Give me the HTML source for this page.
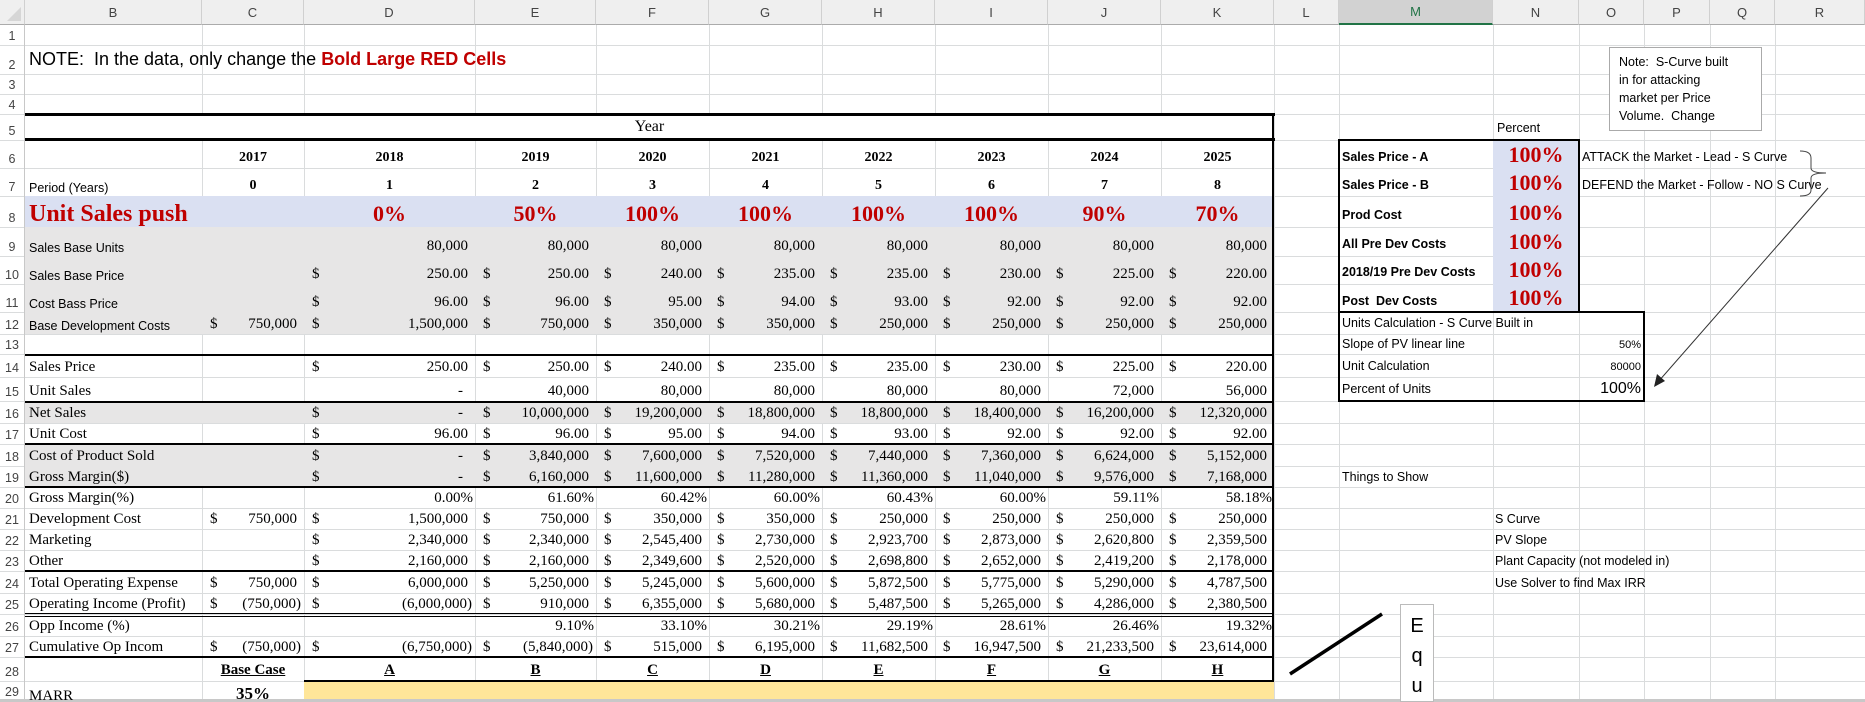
<!DOCTYPE html>
<html><head><meta charset="utf-8">
<style>
*{margin:0;padding:0;box-sizing:border-box}
body{width:1865px;height:702px;overflow:hidden;background:#fff;position:relative;font-family:"Liberation Serif",serif;color:#000}
.a{position:absolute}
.vl{position:absolute;top:25px;height:677px;width:1px;background:#dadcdd}
.hl{position:absolute;left:0;width:1865px;height:1px;background:#dadcdd}
.r{position:absolute;left:0;width:1865px}
.x{position:absolute;top:0;bottom:0;display:flex;justify-content:space-between;align-items:flex-end;padding:0 7px 2px 8px;font-size:15px;white-space:nowrap;line-height:1}
.n{justify-content:flex-end}
.p{padding-right:2px}
.q{padding-right:3px}
.ct{justify-content:center;padding:0 0 3px 0}
.x i{font-style:normal}
.B{left:25px;width:177px}.C{left:202px;width:102px}.D{left:304px;width:171px}.E{left:475px;width:121px}
.F{left:596px;width:113px}.G{left:709px;width:113px}.H{left:822px;width:113px}.I{left:935px;width:113px}
.J{left:1048px;width:113px}.K{left:1161px;width:113px}
.L{left:25px;width:300px;justify-content:flex-start;padding-left:4px}
.cal{font-family:"Liberation Sans",sans-serif;font-size:12.5px}
.bd{font-weight:bold;font-size:14px}
.rd{color:#c00000;font-weight:bold;font-size:22px;padding-bottom:2px}
.ul{font-weight:bold;text-decoration:underline}
.hdr{position:absolute;top:0;height:25px;background:#efefef;border-right:1px solid #d0d0d0;border-bottom:1px solid #ababab;font:13px "Liberation Sans",sans-serif;color:#444;display:flex;align-items:center;justify-content:center}
.rn{position:absolute;left:0;width:25px;font:12.5px "Liberation Sans",sans-serif;color:#444;display:flex;align-items:flex-end;justify-content:center;padding-bottom:2px;border-right:1px solid #c8c8c8}
.tk{position:absolute;background:#000}
.sa{font-family:"Liberation Sans",sans-serif;font-size:12.5px;position:absolute;white-space:nowrap}
</style></head><body>

<!-- column headers -->
<div class="hdr" style="left:0;width:25px"><svg width="14" height="14" style="position:absolute;right:3px;bottom:3px"><polygon points="14,0 14,14 0,14" fill="#d6d6d6"/></svg></div>
<div class="hdr" style="left:25px;width:177px">B</div>
<div class="hdr" style="left:202px;width:102px">C</div>
<div class="hdr" style="left:304px;width:171px">D</div>
<div class="hdr" style="left:475px;width:121px">E</div>
<div class="hdr" style="left:596px;width:113px">F</div>
<div class="hdr" style="left:709px;width:113px">G</div>
<div class="hdr" style="left:822px;width:113px">H</div>
<div class="hdr" style="left:935px;width:113px">I</div>
<div class="hdr" style="left:1048px;width:113px">J</div>
<div class="hdr" style="left:1161px;width:113px">K</div>
<div class="hdr" style="left:1274px;width:65px">L</div>
<div class="hdr" style="left:1339px;width:154px;background:#d2d2d2;color:#217346;border-bottom:2px solid #217346">M</div>
<div class="hdr" style="left:1493px;width:86px">N</div>
<div class="hdr" style="left:1579px;width:65px">O</div>
<div class="hdr" style="left:1644px;width:66px">P</div>
<div class="hdr" style="left:1710px;width:65px">Q</div>
<div class="hdr" style="left:1775px;width:90px">R</div>

<!-- gridlines -->
<div class="vl" style="left:202px"></div><div class="vl" style="left:304px"></div><div class="vl" style="left:475px"></div>
<div class="vl" style="left:596px"></div><div class="vl" style="left:709px"></div><div class="vl" style="left:822px"></div>
<div class="vl" style="left:935px"></div><div class="vl" style="left:1048px"></div><div class="vl" style="left:1161px"></div>
<div class="vl" style="left:1274px"></div><div class="vl" style="left:1339px"></div><div class="vl" style="left:1493px"></div>
<div class="vl" style="left:1579px"></div><div class="vl" style="left:1644px"></div><div class="vl" style="left:1710px"></div>
<div class="vl" style="left:1775px"></div>
<div class="hl" style="top:45px"></div><div class="hl" style="top:74px"></div><div class="hl" style="top:94px"></div>
<div class="hl" style="top:114px"></div><div class="hl" style="top:140px"></div><div class="hl" style="top:168px"></div>
<div class="hl" style="top:196px"></div><div class="hl" style="top:227px"></div><div class="hl" style="top:256px"></div>
<div class="hl" style="top:284px"></div><div class="hl" style="top:312px"></div><div class="hl" style="top:334px"></div>
<div class="hl" style="top:354px"></div><div class="hl" style="top:377px"></div><div class="hl" style="top:401px"></div>
<div class="hl" style="top:423px"></div><div class="hl" style="top:444px"></div><div class="hl" style="top:466px"></div>
<div class="hl" style="top:487px"></div><div class="hl" style="top:508px"></div><div class="hl" style="top:529px"></div>
<div class="hl" style="top:550px"></div><div class="hl" style="top:571px"></div><div class="hl" style="top:593px"></div>
<div class="hl" style="top:614px"></div><div class="hl" style="top:636px"></div><div class="hl" style="top:657px"></div>
<div class="hl" style="top:681px"></div>

<!-- fills -->
<div class="a" style="left:25px;top:114px;width:1249px;height:26px;background:#fff"></div>
<div class="a" style="left:25px;top:196px;width:1249px;height:31px;background:#dae0f2"></div>
<div class="a" style="left:25px;top:227px;width:1249px;height:107px;background:#e7e6e6"></div>
<div class="a" style="left:25px;top:402px;width:1249px;height:21px;background:#e7e6e6"></div>
<div class="a" style="left:25px;top:445px;width:1249px;height:42px;background:#e7e6e6"></div>
<div class="a" style="left:304px;top:682px;width:970px;height:18px;background:#ffe699"></div>
<div class="a" style="left:1493px;top:140px;width:86px;height:172px;background:#dae0f2"></div>

<!-- row numbers -->
<div class="rn" style="top:25px;height:20px">1</div><div class="rn" style="top:45px;height:29px">2</div>
<div class="rn" style="top:74px;height:20px">3</div><div class="rn" style="top:94px;height:20px">4</div>
<div class="rn" style="top:114px;height:26px">5</div><div class="rn" style="top:140px;height:28px">6</div>
<div class="rn" style="top:168px;height:28px">7</div><div class="rn" style="top:196px;height:31px">8</div>
<div class="rn" style="top:227px;height:29px">9</div><div class="rn" style="top:256px;height:28px">10</div>
<div class="rn" style="top:284px;height:28px">11</div><div class="rn" style="top:312px;height:22px">12</div>
<div class="rn" style="top:334px;height:20px">13</div><div class="rn" style="top:354px;height:23px">14</div>
<div class="rn" style="top:377px;height:24px">15</div><div class="rn" style="top:401px;height:22px">16</div>
<div class="rn" style="top:423px;height:21px">17</div><div class="rn" style="top:444px;height:22px">18</div>
<div class="rn" style="top:466px;height:21px">19</div><div class="rn" style="top:487px;height:21px">20</div>
<div class="rn" style="top:508px;height:21px">21</div><div class="rn" style="top:529px;height:21px">22</div>
<div class="rn" style="top:550px;height:21px">23</div><div class="rn" style="top:571px;height:22px">24</div>
<div class="rn" style="top:593px;height:21px">25</div><div class="rn" style="top:614px;height:22px">26</div>
<div class="rn" style="top:636px;height:21px">27</div><div class="rn" style="top:657px;height:24px">28</div>
<div class="rn" style="top:681px;height:21px;align-items:flex-start;padding-top:4px">29</div>

<!-- thick borders -->
<div class="tk" style="left:25px;top:113px;width:1250px;height:3px"></div>
<div class="tk" style="left:25px;top:138px;width:1250px;height:3px"></div>
<div class="tk" style="left:1272px;top:113px;width:2px;height:569px"></div>
<div class="tk" style="left:25px;top:354px;width:1249px;height:2px"></div>
<div class="tk" style="left:25px;top:401px;width:1249px;height:2px"></div>
<div class="tk" style="left:25px;top:443px;width:1249px;height:2px"></div>
<div class="tk" style="left:25px;top:486px;width:1249px;height:2px"></div>
<div class="tk" style="left:25px;top:570px;width:1249px;height:2px"></div>
<div class="tk" style="left:25px;top:613px;width:1249px;height:1px"></div>
<div class="tk" style="left:25px;top:616px;width:1249px;height:1px"></div>
<div class="tk" style="left:25px;top:656px;width:1249px;height:2px"></div>
<div class="tk" style="left:304px;top:680px;width:970px;height:2px"></div>
<div class="a" style="left:0;top:699px;width:1865px;height:3px;background:#c8c8c8"></div>

<!-- row 2 -->
<div class="a" style="left:29px;top:45px;height:29px;display:flex;align-items:center;font:18px 'Liberation Sans',sans-serif;white-space:nowrap">NOTE:&nbsp; In the data, only change the&nbsp;<b style="color:#c00000">Bold Large RED Cells</b></div>
<!-- row 5 -->
<div class="a" style="left:25px;top:114px;width:1249px;height:26px;display:flex;align-items:center;justify-content:center;font-size:16px">Year</div>

<div class="r" style="top:140px;height:28px">
<div class="x C ct bd">2017</div><div class="x D ct bd">2018</div><div class="x E ct bd">2019</div><div class="x F ct bd">2020</div><div class="x G ct bd">2021</div><div class="x H ct bd">2022</div><div class="x I ct bd">2023</div><div class="x J ct bd">2024</div><div class="x K ct bd">2025</div>
</div>
<div class="r" style="top:168px;height:28px">
<div class="x L cal">Period (Years)</div>
<div class="x C ct bd">0</div><div class="x D ct bd">1</div><div class="x E ct bd">2</div><div class="x F ct bd">3</div><div class="x G ct bd">4</div><div class="x H ct bd">5</div><div class="x I ct bd">6</div><div class="x J ct bd">7</div><div class="x K ct bd">8</div>
</div>
<div class="r" style="top:196px;height:31px">
<div class="x L" style="color:#c00000;font-weight:bold;font-size:24px;padding-bottom:1px">Unit Sales push</div>
<div class="x D ct rd">0%</div><div class="x E ct rd">50%</div><div class="x F ct rd">100%</div><div class="x G ct rd">100%</div><div class="x H ct rd">100%</div><div class="x I ct rd">100%</div><div class="x J ct rd">90%</div><div class="x K ct rd">70%</div>
</div>
<div class="r" style="top:227px;height:29px">
<div class="x L cal">Sales Base Units</div>
<div class="x D n">80,000</div><div class="x E n">80,000</div><div class="x F n">80,000</div><div class="x G n">80,000</div><div class="x H n">80,000</div><div class="x I n">80,000</div><div class="x J n">80,000</div><div class="x K n">80,000</div>
</div>
<div class="r" style="top:256px;height:28px">
<div class="x L cal">Sales Base Price</div>
<div class="x D"><i>$</i>250.00</div><div class="x E"><i>$</i>250.00</div><div class="x F"><i>$</i>240.00</div><div class="x G"><i>$</i>235.00</div><div class="x H"><i>$</i>235.00</div><div class="x I"><i>$</i>230.00</div><div class="x J"><i>$</i>225.00</div><div class="x K"><i>$</i>220.00</div>
</div>
<div class="r" style="top:284px;height:28px">
<div class="x L cal">Cost Bass Price</div>
<div class="x D"><i>$</i>96.00</div><div class="x E"><i>$</i>96.00</div><div class="x F"><i>$</i>95.00</div><div class="x G"><i>$</i>94.00</div><div class="x H"><i>$</i>93.00</div><div class="x I"><i>$</i>92.00</div><div class="x J"><i>$</i>92.00</div><div class="x K"><i>$</i>92.00</div>
</div>
<div class="r" style="top:312px;height:22px">
<div class="x L cal">Base Development Costs</div>
<div class="x C"><i>$</i>750,000</div><div class="x D"><i>$</i>1,500,000</div><div class="x E"><i>$</i>750,000</div><div class="x F"><i>$</i>350,000</div><div class="x G"><i>$</i>350,000</div><div class="x H"><i>$</i>250,000</div><div class="x I"><i>$</i>250,000</div><div class="x J"><i>$</i>250,000</div><div class="x K"><i>$</i>250,000</div>
</div>
<div class="r" style="top:355px;height:22px">
<div class="x L">Sales Price</div>
<div class="x D"><i>$</i>250.00</div><div class="x E"><i>$</i>250.00</div><div class="x F"><i>$</i>240.00</div><div class="x G"><i>$</i>235.00</div><div class="x H"><i>$</i>235.00</div><div class="x I"><i>$</i>230.00</div><div class="x J"><i>$</i>225.00</div><div class="x K"><i>$</i>220.00</div>
</div>
<div class="r" style="top:377px;height:24px">
<div class="x L">Unit Sales</div>
<div class="x D n" style="padding-right:12px">-</div><div class="x E n">40,000</div><div class="x F n">80,000</div><div class="x G n">80,000</div><div class="x H n">80,000</div><div class="x I n">80,000</div><div class="x J n">72,000</div><div class="x K n">56,000</div>
</div>
<div class="r" style="top:401px;height:22px">
<div class="x L">Net Sales</div>
<div class="x D" style="padding-right:12px"><i>$</i>-</div><div class="x E"><i>$</i>10,000,000</div><div class="x F"><i>$</i>19,200,000</div><div class="x G"><i>$</i>18,800,000</div><div class="x H"><i>$</i>18,800,000</div><div class="x I"><i>$</i>18,400,000</div><div class="x J"><i>$</i>16,200,000</div><div class="x K"><i>$</i>12,320,000</div>
</div>
<div class="r" style="top:423px;height:21px">
<div class="x L">Unit Cost</div>
<div class="x D"><i>$</i>96.00</div><div class="x E"><i>$</i>96.00</div><div class="x F"><i>$</i>95.00</div><div class="x G"><i>$</i>94.00</div><div class="x H"><i>$</i>93.00</div><div class="x I"><i>$</i>92.00</div><div class="x J"><i>$</i>92.00</div><div class="x K"><i>$</i>92.00</div>
</div>
<div class="r" style="top:444px;height:22px">
<div class="x L">Cost of Product Sold</div>
<div class="x D" style="padding-right:12px"><i>$</i>-</div><div class="x E"><i>$</i>3,840,000</div><div class="x F"><i>$</i>7,600,000</div><div class="x G"><i>$</i>7,520,000</div><div class="x H"><i>$</i>7,440,000</div><div class="x I"><i>$</i>7,360,000</div><div class="x J"><i>$</i>6,624,000</div><div class="x K"><i>$</i>5,152,000</div>
</div>
<div class="r" style="top:466px;height:21px">
<div class="x L">Gross Margin($)</div>
<div class="x D" style="padding-right:12px"><i>$</i>-</div><div class="x E"><i>$</i>6,160,000</div><div class="x F"><i>$</i>11,600,000</div><div class="x G"><i>$</i>11,280,000</div><div class="x H"><i>$</i>11,360,000</div><div class="x I"><i>$</i>11,040,000</div><div class="x J"><i>$</i>9,576,000</div><div class="x K"><i>$</i>7,168,000</div>
</div>
<div class="r" style="top:487px;height:21px">
<div class="x L">Gross Margin(%)</div>
<div class="x D n p">0.00%</div><div class="x E n p">61.60%</div><div class="x F n p">60.42%</div><div class="x G n p">60.00%</div><div class="x H n p">60.43%</div><div class="x I n p">60.00%</div><div class="x J n p">59.11%</div><div class="x K n p">58.18%</div>
</div>
<div class="r" style="top:508px;height:21px">
<div class="x L">Development Cost</div>
<div class="x C"><i>$</i>750,000</div><div class="x D"><i>$</i>1,500,000</div><div class="x E"><i>$</i>750,000</div><div class="x F"><i>$</i>350,000</div><div class="x G"><i>$</i>350,000</div><div class="x H"><i>$</i>250,000</div><div class="x I"><i>$</i>250,000</div><div class="x J"><i>$</i>250,000</div><div class="x K"><i>$</i>250,000</div>
</div>
<div class="r" style="top:529px;height:21px">
<div class="x L">Marketing</div>
<div class="x D"><i>$</i>2,340,000</div><div class="x E"><i>$</i>2,340,000</div><div class="x F"><i>$</i>2,545,400</div><div class="x G"><i>$</i>2,730,000</div><div class="x H"><i>$</i>2,923,700</div><div class="x I"><i>$</i>2,873,000</div><div class="x J"><i>$</i>2,620,800</div><div class="x K"><i>$</i>2,359,500</div>
</div>
<div class="r" style="top:550px;height:21px">
<div class="x L">Other</div>
<div class="x D"><i>$</i>2,160,000</div><div class="x E"><i>$</i>2,160,000</div><div class="x F"><i>$</i>2,349,600</div><div class="x G"><i>$</i>2,520,000</div><div class="x H"><i>$</i>2,698,800</div><div class="x I"><i>$</i>2,652,000</div><div class="x J"><i>$</i>2,419,200</div><div class="x K"><i>$</i>2,178,000</div>
</div>
<div class="r" style="top:571px;height:22px">
<div class="x L">Total Operating Expense</div>
<div class="x C"><i>$</i>750,000</div><div class="x D"><i>$</i>6,000,000</div><div class="x E"><i>$</i>5,250,000</div><div class="x F"><i>$</i>5,245,000</div><div class="x G"><i>$</i>5,600,000</div><div class="x H"><i>$</i>5,872,500</div><div class="x I"><i>$</i>5,775,000</div><div class="x J"><i>$</i>5,290,000</div><div class="x K"><i>$</i>4,787,500</div>
</div>
<div class="r" style="top:593px;height:21px">
<div class="x L">Operating Income (Profit)</div>
<div class="x C q"><i>$</i>(750,000)</div><div class="x D q"><i>$</i>(6,000,000)</div><div class="x E"><i>$</i>910,000</div><div class="x F"><i>$</i>6,355,000</div><div class="x G"><i>$</i>5,680,000</div><div class="x H"><i>$</i>5,487,500</div><div class="x I"><i>$</i>5,265,000</div><div class="x J"><i>$</i>4,286,000</div><div class="x K"><i>$</i>2,380,500</div>
</div>
<div class="r" style="top:614px;height:22px">
<div class="x L">Opp Income (%)</div>
<div class="x E n p">9.10%</div><div class="x F n p">33.10%</div><div class="x G n p">30.21%</div><div class="x H n p">29.19%</div><div class="x I n p">28.61%</div><div class="x J n p">26.46%</div><div class="x K n p">19.32%</div>
</div>
<div class="r" style="top:636px;height:21px">
<div class="x L">Cumulative Op Incom</div>
<div class="x C q"><i>$</i>(750,000)</div><div class="x D q"><i>$</i>(6,750,000)</div><div class="x E q"><i>$</i>(5,840,000)</div><div class="x F"><i>$</i>515,000</div><div class="x G"><i>$</i>6,195,000</div><div class="x H"><i>$</i>11,682,500</div><div class="x I"><i>$</i>16,947,500</div><div class="x J"><i>$</i>21,233,500</div><div class="x K"><i>$</i>23,614,000</div>
</div>
<div class="r" style="top:657px;height:24px">
<div class="x C ct ul">Base Case</div><div class="x D ct ul">A</div><div class="x E ct ul">B</div><div class="x F ct ul">C</div><div class="x G ct ul">D</div><div class="x H ct ul">E</div><div class="x I ct ul">F</div><div class="x J ct ul">G</div><div class="x K ct ul">H</div>
</div>
<div class="r" style="top:681px;height:21px;overflow:hidden">
<div class="x L" style="align-items:flex-start;padding-top:8px">MARR</div>
<div class="x C ct" style="align-items:flex-start;padding-top:4px;font-weight:bold;font-size:17px">35%</div>
</div>

<!-- right panel -->
<div class="sa" style="left:1497px;top:121px">Percent</div>
<div class="a" style="left:1338px;top:139px;width:242px;height:174px;border:2px solid #000"></div>
<div class="a" style="left:1338px;top:311px;width:307px;height:91px;border:2px solid #000"></div>
<div class="sa" style="left:1342px;top:150px;font-weight:bold">Sales Price - A</div>
<div class="sa" style="left:1342px;top:178px;font-weight:bold">Sales Price - B</div>
<div class="sa" style="left:1342px;top:208px;font-weight:bold">Prod Cost</div>
<div class="sa" style="left:1342px;top:237px;font-weight:bold">All Pre Dev Costs</div>
<div class="sa" style="left:1342px;top:265px;font-weight:bold">2018/19 Pre Dev Costs</div>
<div class="sa" style="left:1342px;top:294px;font-weight:bold">Post&nbsp; Dev Costs</div>
<div class="a" style="left:1493px;top:140px;width:86px;font-weight:bold;font-size:22px;color:#c00000;text-align:center;line-height:1">
<div style="position:absolute;left:0;width:86px;top:4px">100%</div>
<div style="position:absolute;left:0;width:86px;top:32px">100%</div>
<div style="position:absolute;left:0;width:86px;top:62px">100%</div>
<div style="position:absolute;left:0;width:86px;top:91px">100%</div>
<div style="position:absolute;left:0;width:86px;top:119px">100%</div>
<div style="position:absolute;left:0;width:86px;top:147px">100%</div>
</div>
<div class="sa" style="left:1342px;top:316px">Units Calculation - S Curve Built in</div>
<div class="sa" style="left:1342px;top:337px">Slope of PV linear line</div>
<div class="sa" style="left:1342px;top:359px">Unit Calculation</div>
<div class="sa" style="left:1342px;top:382px">Percent of Units</div>
<div class="sa" style="left:1560px;width:81px;text-align:right;top:339px;font-size:11px">50%</div>
<div class="sa" style="left:1560px;width:81px;text-align:right;top:361px;font-size:11px">80000</div>
<div class="sa" style="left:1560px;width:81px;text-align:right;top:380px;font-size:16px">100%</div>

<div class="a" style="left:1609px;top:47px;width:153px;height:84px;border:1px solid #aaa;background:#fff;font:12.5px 'Liberation Sans',sans-serif;line-height:18px;padding:5px 0 0 9px">Note:&nbsp; S-Curve built<br>in for attacking<br>market per Price<br>Volume.&nbsp; Change</div>

<div class="sa" style="left:1582px;top:150px">ATTACK the Market - Lead - S Curve</div>
<div class="sa" style="left:1582px;top:178px">DEFEND the Market - Follow - NO S Curve</div>

<svg class="a" style="left:0;top:0" width="1865" height="702">
<path d="M1800 151 Q1811 151 1811 158 L1811 168 Q1811 173 1826 173 Q1811 173 1811 178 L1811 190 Q1811 196 1800 196" fill="none" stroke="#444" stroke-width="1"/>
<line x1="1828" y1="188" x2="1658" y2="382" stroke="#333" stroke-width="1"/>
<polygon points="1654,387 1657,374 1665,381" fill="#222"/>
<line x1="1290" y1="674" x2="1382" y2="614" stroke="#000" stroke-width="3.5"/>
</svg>

<div class="sa" style="left:1342px;top:470px">Things to Show</div>
<div class="sa" style="left:1495px;top:512px">S Curve</div>
<div class="sa" style="left:1495px;top:533px">PV Slope</div>
<div class="sa" style="left:1495px;top:554px">Plant Capacity (not modeled in)</div>
<div class="sa" style="left:1495px;top:576px">Use Solver to find Max IRR</div>

<div class="a" style="left:1400px;top:604px;width:34px;height:98px;border:1px solid #bbb;background:#fff;font:20px 'Liberation Sans',sans-serif;text-align:center;line-height:30px;padding-top:6px">E<br>q<br>u</div>
</body></html>
